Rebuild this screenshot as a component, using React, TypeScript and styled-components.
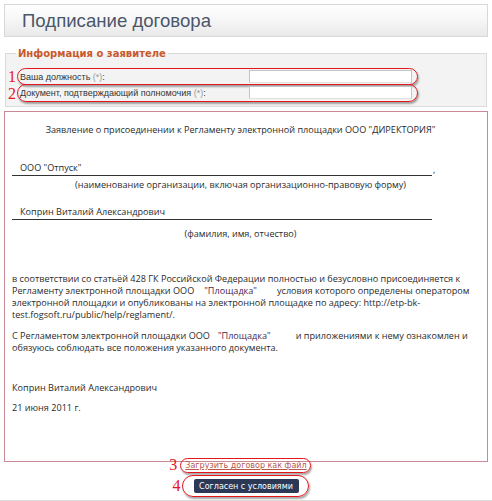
import React from "react";
import styled, { createGlobalStyle } from "styled-components";

const Global = createGlobalStyle`
  html, body { margin: 0; padding: 0; background: #fff; }
  body { font-family: "DejaVu Sans", Verdana, sans-serif; }
`;

const Page = styled.div`
  width: 492px;
  height: 501px;
  box-sizing: border-box;
  padding: 4px 4px 0 4px;
  border-bottom: 1px solid #dcdcdc;
  overflow: hidden;
`;

const Header = styled.div`
  height: 33px;
  box-sizing: border-box;
  border: 1px solid #d8d8d8;
  background: linear-gradient(#ffffff 0%, #f7f7f7 45%, #e9e9e9 100%);
  display: flex;
  align-items: center;
  padding-left: 17px;
`;

const Title = styled.h1`
  margin: 0;
  font-family: "Liberation Sans", Arial, sans-serif;
  font-weight: normal;
  font-size: 18.6px;
  color: #4b5669;
`;

const Fieldset = styled.fieldset`
  margin: 11px 1px 0 1px;
  padding: 11px 0 7px 14px;
  border: 1px solid #dadada;
  background: #f3f3f3;
  display: grid;
  row-gap: 3px;
`;

const Legend = styled.legend`
  margin-left: -4px;
  padding: 0 2px;
  font-family: "DejaVu Sans", Verdana, sans-serif;
  font-weight: bold;
  font-size: 10px;
  color: #c85a2c;
`;

const Row = styled.div`
  position: relative;
  width: 392px;
  display: grid;
  grid-template-columns: 229px 163px;
  align-items: center;
  height: 13px;
`;

const Label = styled.label`
  font-family: "Liberation Sans", Arial, sans-serif;
  font-size: 9px;
  color: #333;
  white-space: nowrap;
`;

const Req = styled.span`
  color: #9a9a9a;
`;

const Input = styled.div`
  height: 13px;
  box-sizing: border-box;
  background: #fff;
  border: 1px solid #c4c4c4;
  border-bottom-color: #e0e0e0;
`;

const Ring = styled.span<{ $l: number; $r: number; $t: number; $b: number }>`
  position: absolute;
  left: ${(p) => p.$l}px;
  right: ${(p) => p.$r}px;
  top: ${(p) => p.$t}px;
  bottom: ${(p) => p.$b}px;
  border: 1.5px solid #e4161c;
  border-radius: 999px;
  box-shadow: 1px 2px 2px rgba(0, 0, 0, 0.35);
  pointer-events: none;
`;

const Num = styled.span<{ $l: number; $t: number }>`
  position: absolute;
  left: ${(p) => p.$l}px;
  top: ${(p) => p.$t}px;
  font-family: "Liberation Serif", "Times New Roman", serif;
  font-size: 16px;
  line-height: 16px;
  color: #e4161c;
`;

const Doc = styled.div`
  margin-top: 4px;
  height: 351px;
  box-sizing: border-box;
  border: 1px solid #c98a96;
  background: #fff;
  padding: 12px 18px 0 7px;
  font-family: "Open Sans", "Noto Sans", sans-serif;
  font-size: 9.1px;
  color: #2a2a2a;
`;

const Center = styled.div<{ $mt: number }>`
  text-align: center;
  margin-top: ${(p) => p.$mt}px;
  line-height: 12px;
  white-space: nowrap;
`;

const LineRow = styled.div<{ $mt: number }>`
  margin-top: ${(p) => p.$mt}px;
  display: flex;
  align-items: flex-end;
`;

const Underlined = styled.div`
  width: 420px;
  border-bottom: 1px solid #333;
  padding-left: 8px;
  box-sizing: border-box;
  line-height: 12px;
  padding-bottom: 1px;
`;

const Comma = styled.span`
  margin-left: 1px;
  line-height: 12px;
`;

const Para = styled.p<{ $mt: number }>`
  margin: ${(p) => p.$mt}px 0 0 0;
  line-height: 12px;
  white-space: nowrap;
`;

const Org = styled.span<{ $ml: number; $mr: number }>`
  color: #4a1f52;
  padding-left: ${(p) => p.$ml}px;
  padding-right: ${(p) => p.$mr}px;
`;

const Actions = styled.div`
  display: flex;
  flex-direction: column;
  align-items: center;
  margin-top: -2px;
  gap: 8px;
`;

const Anchor = styled.span`
  position: relative;
  display: inline-block;
`;

const Link = styled.a`
  font-family: "DejaVu Sans", Verdana, sans-serif;
  font-size: 8px;
  color: #b5574c;
  text-decoration: underline;
  line-height: 11px;
  display: block;
`;

const Button = styled.button`
  display: block;
  width: 105px;
  height: 14px;
  border: none;
  border-radius: 2px;
  background: #2c3956;
  color: #fff;
  font-family: "DejaVu Sans", Verdana, sans-serif;
  font-size: 8px;
  padding: 0;
`;

export default function App() {
  return (
    <>
      <Global />
      <Page>
        <Header>
          <Title>Подписание договора</Title>
        </Header>
        <Fieldset>
          <Legend>Информация о заявителе</Legend>
          <Row>
            <Label>
              Ваша должность <Req>(*)</Req>:
            </Label>
            <Input />
            <Ring $l={-3} $r={-6} $t={-2} $b={-2} />
            <Num $l={-12} $t={-1}>1</Num>
          </Row>
          <Row>
            <Label>
              Документ, подтверждающий полномочия <Req>(*)</Req>:
            </Label>
            <Input />
            <Ring $l={-3} $r={-6} $t={-2} $b={-3} />
            <Num $l={-12} $t={0}>2</Num>
          </Row>
        </Fieldset>
        <Doc>
          <Center $mt={0}>
            Заявление о присоединении к Регламенту электронной площадки ООО "ДИРЕКТОРИЯ"
          </Center>
          <LineRow $mt={26}>
            <Underlined>ООО "Отпуск"</Underlined>
            <Comma>,</Comma>
          </LineRow>
          <Center $mt={3}>(наименование организации, включая организационно-правовую форму)</Center>
          <LineRow $mt={15}>
            <Underlined>Коприн Виталий Александрович</Underlined>
          </LineRow>
          <Center $mt={8}>(фамилия, имя, отчество)</Center>
          <Para $mt={33}>
            в соответствии со статьёй 428 ГК Российской Федерации полностью и безусловно присоединяется к
            <br />
            Регламенту электронной площадки ООО<Org $ml={10} $mr={20}>"Площадка"</Org>условия которого
            определены оператором
            <br />
            электронной площадки и опубликованы на электронной площадке по адресу: http://etp-bk-
            <br />
            test.fogsoft.ru/public/help/reglament/.
          </Para>
          <Para $mt={9}>
            С Регламентом электронной площадки ООО<Org $ml={8} $mr={25}>"Площадка"</Org>и приложениями к нему
            ознакомлен и
            <br />
            обязуюсь соблюдать все положения указанного документа.
          </Para>
          <Para $mt={28}>Коприн Виталий Александрович</Para>
          <Para $mt={8}>21 июня 2011 г.</Para>
        </Doc>
        <Actions>
          <Anchor>
            <Link href="#">Загрузить договор как файл</Link>
            <Ring $l={-5} $r={-4} $t={-2} $b={-2} />
            <Num $l={-16} $t={-3}>3</Num>
          </Anchor>
          <Anchor>
            <Button>Согласен с условиями</Button>
            <Ring $l={-12} $r={-10} $t={-4} $b={-4} />
            <Num $l={-21} $t={-1}>4</Num>
          </Anchor>
        </Actions>
      </Page>
    </>
  );
}
